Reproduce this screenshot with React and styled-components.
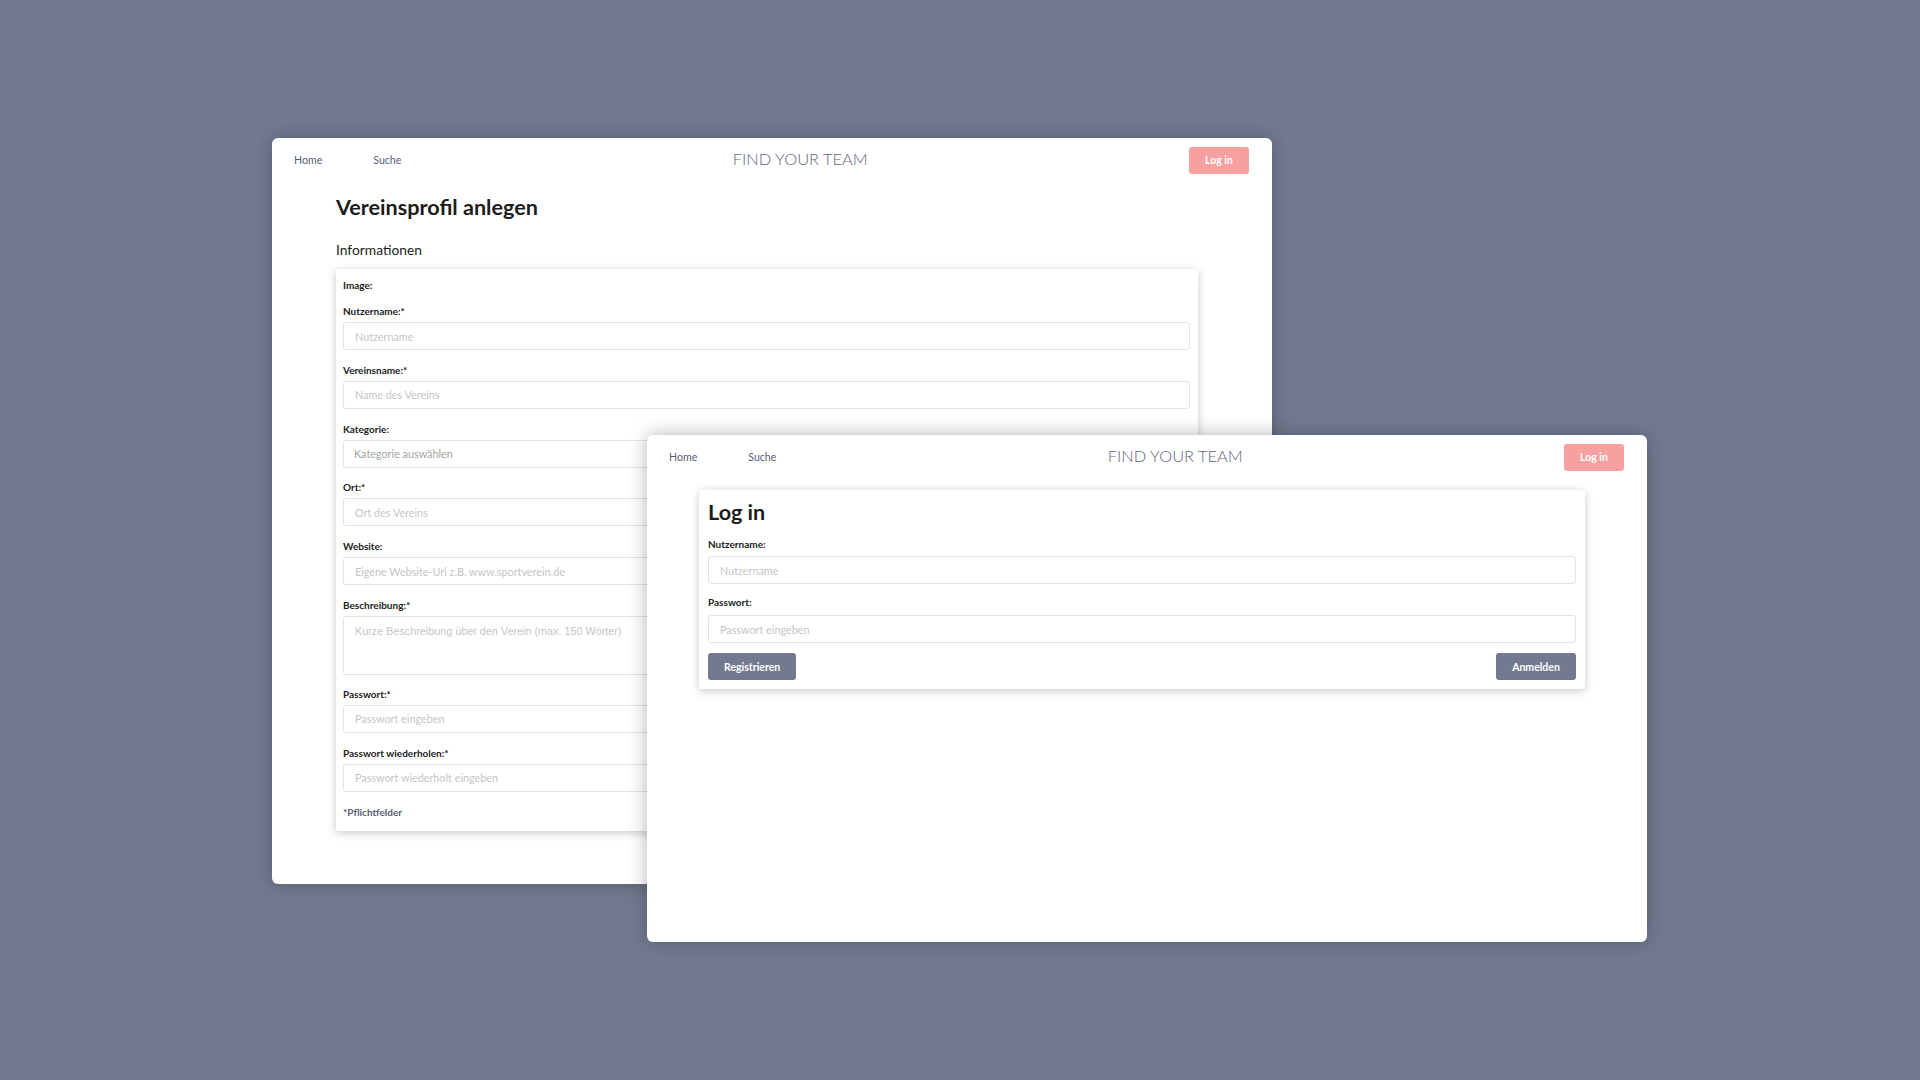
import React from 'react'
import styled, { createGlobalStyle } from 'styled-components'

const GlobalStyle = createGlobalStyle`
  html, body {
    margin: 0;
    padding: 0;
    background: #737a8f;
  }
  body {
    font-family: Lato, "Open Sans", sans-serif;
    color: #222;
  }
  * { box-sizing: border-box; }
`

// desktop the two browser windows float on
const Stage = styled.div`
  position: relative;
  width: 100vw;
  height: 100vh;
  overflow: hidden;
  background: #737a8f;
`

const BrowserWindow = styled.div`
  position: absolute;
  left: ${p => p.$left}px;
  top: ${p => p.$top}px;
  width: 1000px;
  height: ${p => p.$height}px;
  background: #fff;
  border-radius: 6px;
  box-shadow: 0 0 18px rgba(30, 34, 50, 0.35);
  display: flex;
  flex-direction: column;
`

const Nav = styled.nav`
  display: flex;
  align-items: center;
  justify-content: space-between;
  height: 28px;
  margin-top: 8px;
  padding: 0 23px 0 22px;
`

const NavLinks = styled.div`
  display: flex;
  gap: 51px;
`

const NavLink = styled.a`
  font-size: 10.6px;
  color: #565d76;
  text-decoration: none;
`

const Brand = styled.div`
  font-size: 16.4px;
  line-height: 18px;
  font-weight: 300;
  color: #60667f;
  margin: -2px 0 0 10px;
`

const Button = styled.button`
  height: 27px;
  padding: 0 16px;
  border: none;
  border-radius: 3px;
  background: ${p => (p.$pink ? '#f6a09f' : '#737a90')};
  color: #fff;
  font-family: Lato, sans-serif;
  font-weight: 700;
  font-size: 10.5px;
  min-width: ${p => p.$min || 0}px;
`

const Content = styled.main`
  padding: 20px 74px 0 64px;
`

const PageTitle = styled.h1`
  margin: 0;
  font-size: 21.6px;
  line-height: 26px;
  font-weight: 700;
  color: #1c1c1c;
`

const SubTitle = styled.h2`
  margin: 21px 0 11px;
  font-size: 13.8px;
  line-height: 17px;
  font-weight: 400;
  color: #1c1c1c;
`

const Card = styled.form`
  background: #fff;
  border-radius: 3px;
  box-shadow: 0 2px 10px rgba(0, 0, 0, 0.22);
  padding: ${p => p.$pad || '10px 8px 13px 7px'};
`

const Field = styled.div`
  display: flex;
  flex-direction: column;
  gap: ${p => p.$gap || 5}px;
  margin-bottom: ${p => p.$mb || 13.8}px;
`

const Label = styled.label`
  font-size: 10px;
  line-height: 12px;
  font-weight: 700;
  color: #222;
`

const Input = styled.input`
  height: 28px;
  width: 100%;
  border: 1px solid #e3e3e3;
  border-radius: 3px;
  padding: 0 11px;
  font-family: Lato, sans-serif;
  font-size: 10.8px;
  color: #333;
  outline: none;
  &::placeholder { color: #c5c5c5; }
`

const Select = styled.select`
  height: 28px;
  width: 100%;
  border: 1px solid #e3e3e3;
  border-radius: 3px;
  padding: 0 10px;
  font-family: Lato, sans-serif;
  font-size: 10.8px;
  color: #a3a3a3;
  background: #fff;
  appearance: none;
  outline: none;
`

const TextArea = styled.textarea`
  height: 59px;
  width: 100%;
  border: 1px solid #e3e3e3;
  border-radius: 3px;
  padding: 8px 11px;
  font-family: "Liberation Sans", Arial, sans-serif;
  font-size: 10.8px;
  resize: none;
  outline: none;
  &::placeholder { color: #c5c5c5; }
`

const Hint = styled.div`
  font-size: 10px;
  line-height: 12px;
  font-weight: 700;
  color: #5a6078;
`

const LoginWrap = styled.main`
  padding: 19px 62px 0 52px;
`

const LoginTitle = styled.h1`
  margin: 0 0 13px;
  font-size: 21.6px;
  line-height: 26px;
  font-weight: 700;
  color: #1c1c1c;
`

const ButtonRow = styled.div`
  display: flex;
  justify-content: space-between;
  margin-top: -1px;
`

const TopBar = () => (
  <Nav>
    <NavLinks>
      <NavLink href="#">Home</NavLink>
      <NavLink href="#">Suche</NavLink>
    </NavLinks>
    <Brand>FIND YOUR TEAM</Brand>
    <Button type="button" $pink $min={60}>Log in</Button>
  </Nav>
)

const TextField = ({ label, placeholder, type = 'text' }) => (
  <Field>
    <Label>{label}</Label>
    <Input type={type} placeholder={placeholder} />
  </Field>
)

const ProfileWindow = () => (
  <BrowserWindow $left={272} $top={138} $height={746}>
    <TopBar />
    <Content>
      <PageTitle>Vereinsprofil anlegen</PageTitle>
      <SubTitle>Informationen</SubTitle>
      <Card>
        <Field $mb={14}>
          <Label>Image:</Label>
        </Field>
        <TextField label="Nutzername:*" placeholder="Nutzername" />
        <TextField label="Vereinsname:*" placeholder="Name des Vereins" />
        <Field>
          <Label>Kategorie:</Label>
          <Select defaultValue="">
            <option value="">Kategorie auswählen</option>
          </Select>
        </Field>
        <TextField label="Ort:*" placeholder="Ort des Vereins" />
        <TextField label="Website:" placeholder="Eigene Website-Url z.B. www.sportverein.de" />
        <Field $mb={13}>
          <Label>Beschreibung:*</Label>
          <TextArea placeholder="Kurze Beschreibung über den Verein (max. 150 Wörter)" />
        </Field>
        <TextField label="Passwort:*" placeholder="Passwort eingeben" type="password" />
        <TextField label="Passwort wiederholen:*" placeholder="Passwort wiederholt eingeben" type="password" />
        <Hint>*Pflichtfelder</Hint>
      </Card>
    </Content>
  </BrowserWindow>
)

const LoginWindow = () => (
  <BrowserWindow $left={647} $top={435} $height={507}>
    <TopBar />
    <LoginWrap>
      <Card $pad="9px 9px 9px 9px">
        <LoginTitle>Log in</LoginTitle>
        <Field $gap={6} $mb={12}>
          <Label>Nutzername:</Label>
          <Input placeholder="Nutzername" />
        </Field>
        <Field $gap={7} $mb={11}>
          <Label>Passwort:</Label>
          <Input type="password" placeholder="Passwort eingeben" />
        </Field>
        <ButtonRow>
          <Button type="button" $min={74}>Registrieren</Button>
          <Button type="button" $min={80}>Anmelden</Button>
        </ButtonRow>
      </Card>
    </LoginWrap>
  </BrowserWindow>
)

export default function App() {
  return (
    <>
      <GlobalStyle />
      <Stage>
        <ProfileWindow />
        <LoginWindow />
      </Stage>
    </>
  )
}
